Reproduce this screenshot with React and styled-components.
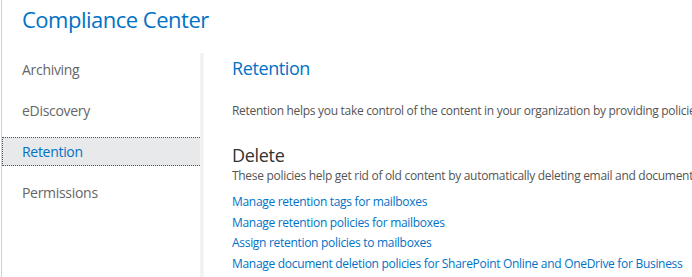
import styled, { createGlobalStyle } from 'styled-components'

const GlobalStyle = createGlobalStyle`
    html, body {
        margin: 0;
        padding: 0;
        background: #fff;
    }
    body {
        font-family: "Open Sans", "Noto Sans", sans-serif;
        overflow: hidden;
    }
`

const Page = styled.div`
    margin-left: 1px;
    border-left: 1px solid #d2d2d2;
    height: 277px;
    box-sizing: border-box;
`

const Header = styled.header`
    padding: 4px 0 0 20px;
    height: 50px;
    box-sizing: border-box;
`

const AppTitle = styled.h1`
    margin: 0;
    font-size: 22px;
    font-weight: 400;
    color: #0072c6;
    letter-spacing: -0.5px;
    line-height: 30px;
`

const Body = styled.div`
    display: flex;
    height: 227px;
`

const Nav = styled.nav`
    width: 200px;
    padding-top: 5px;
    display: flex;
    flex-direction: column;
    gap: 12px;
`

const NavItem = styled.div`
    height: 29px;
    box-sizing: border-box;
    padding-left: 19px;
    display: flex;
    align-items: center;
    font-size: 14px;
    letter-spacing: -0.3px;
    color: ${props => props.active ? '#0072c6' : '#666'};
    background: ${props => props.active ? '#e8e9ea' : 'transparent'};
    border: 1px dotted ${props => props.active ? '#555' : 'transparent'};
    cursor: pointer;
`

const Divider = styled.div`
    width: 4px;
    margin-top: 3px;
    margin-left: -2px;
    background: linear-gradient(to right, #f6f6f6, #efefef, #f8f8f8);
`

const Content = styled.main`
    flex: 1;
    padding-left: 28px;
    overflow: hidden;
    white-space: nowrap;
`

const PageTitle = styled.h2`
    margin: 5px 0 0;
    font-size: 18px;
    font-weight: 400;
    line-height: 26px;
    color: #0072c6;
    letter-spacing: -0.4px;
`

const Text = styled.p`
    margin: ${props => props.top || 0}px 0 0;
    font-size: 12px;
    line-height: 18px;
    color: #555;
    letter-spacing: -0.3px;
`

const SectionTitle = styled.h3`
    margin: 23px 0 0;
    font-size: 18px;
    font-weight: 400;
    line-height: 24px;
    color: #333;
    letter-spacing: -0.3px;
`

const LinkList = styled.div`
    margin-top: 8px;
    display: flex;
    flex-direction: column;
    gap: 2.7px;
`

const Link = styled.a`
    font-size: 12px;
    line-height: 18px;
    color: #0072c6;
    text-decoration: none;
    letter-spacing: -0.3px;
    cursor: pointer;
`

const navItems = ['Archiving', 'eDiscovery', 'Retention', 'Permissions']

const links = [
    'Manage retention tags for mailboxes',
    'Manage retention policies for mailboxes',
    'Assign retention policies to mailboxes',
    'Manage document deletion policies for SharePoint Online and OneDrive for Business',
]

export default function App() {
    return (
        <>
            <GlobalStyle />
            <Page>
                <Header>
                    <AppTitle>Compliance Center</AppTitle>
                </Header>
                <Body>
                    <Nav>
                        {navItems.map(item => (
                            <NavItem key={item} active={item === 'Retention'}>{item}</NavItem>
                        ))}
                    </Nav>
                    <Divider />
                    <Content>
                        <PageTitle>Retention</PageTitle>
                        <Text top={21}>
                            Retention helps you take control of the content in your organization by providing policies that
                        </Text>
                        <SectionTitle>Delete</SectionTitle>
                        <Text>
                            These policies help get rid of old content by automatically deleting email and documents after a period of time.
                        </Text>
                        <LinkList>
                            {links.map(link => (
                                <Link key={link}>{link}</Link>
                            ))}
                        </LinkList>
                    </Content>
                </Body>
            </Page>
        </>
    )
}
